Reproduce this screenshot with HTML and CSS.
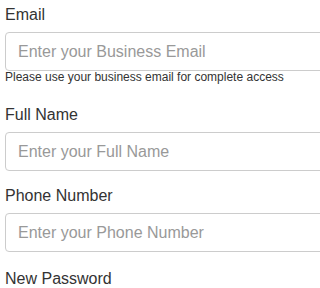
FILE: index.html
```html
<!DOCTYPE html>
<html lang="en">
<head>
<meta charset="utf-8">
<title>Sign up</title>
<link rel="stylesheet" href="styles.css">
</head>
<body>
<form class="signup">
  <div class="field field--email">
    <label class="field__label" for="email">Email</label>
    <input class="field__input" id="email" type="email" placeholder="Enter your Business Email">
    <span class="field__help">Please use your business email for complete access</span>
  </div>
  <div class="field">
    <label class="field__label" for="name">Full Name</label>
    <input class="field__input" id="name" type="text" placeholder="Enter your Full Name">
  </div>
  <div class="field field--phone">
    <label class="field__label" for="phone">Phone Number</label>
    <input class="field__input" id="phone" type="tel" placeholder="Enter your Phone Number">
  </div>
  <div class="field">
    <label class="field__label" for="password">New Password</label>
    <input class="field__input" id="password" type="password" placeholder="Enter a Password">
  </div>
</form>
</body>
</html>
```

FILE: styles.css
```css
html, body {
  margin: 0;
  padding: 0;
  width: 100%;
  height: 100%;
  background: #ffffff;
  overflow: hidden;
}

body {
  font-family: "Liberation Sans", Arial, sans-serif;
  color: #333333;
}

.signup {
  box-sizing: border-box;
  display: flex;
  flex-direction: column;
  width: 100%;
  height: 100%;
  padding: 3px 0 0 5px;
  overflow: hidden;
}

.field {
  display: flex;
  flex-direction: column;
  flex-shrink: 0;
  margin-bottom: 13px;
}

.field--phone {
  margin-bottom: 15px;
}

.field__label {
  display: block;
  font-size: 16px;
  line-height: 23px;
  margin-bottom: 6px;
  color: #333333;
}

.field__input {
  box-sizing: border-box;
  width: calc(100% + 20px);
  height: 39px;
  margin: 0;
  padding: 0 12px;
  border: 1px solid #cccccc;
  border-radius: 4px;
  background: #ffffff;
  font-family: "Liberation Sans", Arial, sans-serif;
  font-size: 16px;
  color: #555555;
  outline: none;
}

.field__input::placeholder {
  color: #999999;
  opacity: 1;
}

.field__help {
  display: block;
  white-space: nowrap;
  font-size: 12px;
  line-height: 13px;
  margin-bottom: 6px;
  color: #333333;
}
```
